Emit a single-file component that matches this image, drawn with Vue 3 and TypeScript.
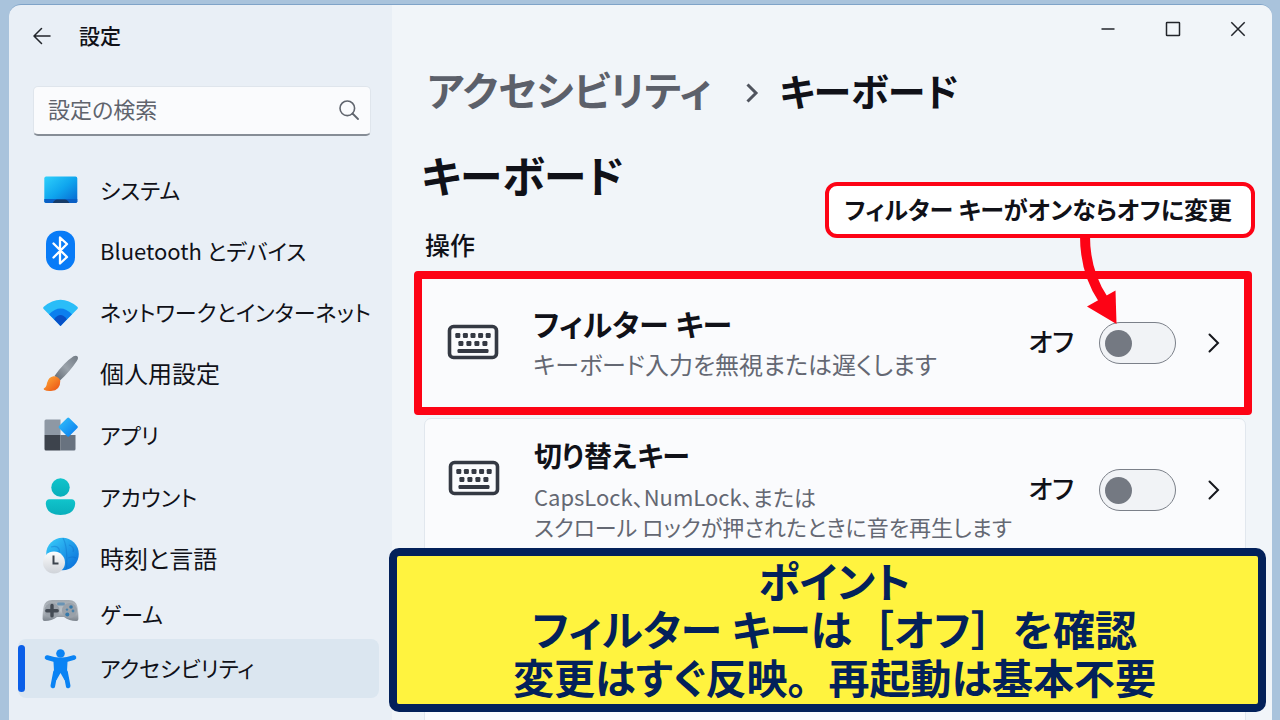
<script setup lang="ts">
import { ref } from 'vue'

interface NavItem {
  id: string
  label: string
  kanji?: boolean
}

interface KeySetting {
  id: string
  title: string
  lines: string[]
  on: boolean
  highlighted: boolean
}

const navItems: NavItem[] = [
  { id: 'system', label: 'システム' },
  { id: 'bluetooth', label: 'Bluetooth とデバイス' },
  { id: 'network', label: 'ネットワークとインターネット' },
  { id: 'personal', label: '個人用設定', kanji: true },
  { id: 'apps', label: 'アプリ' },
  { id: 'account', label: 'アカウント' },
  { id: 'time', label: '時刻と言語', kanji: true },
  { id: 'game', label: 'ゲーム' },
  { id: 'access', label: 'アクセシビリティ' },
]

const activeId = ref('access')
const query = ref('')

const settings = ref<KeySetting[]>([
  {
    id: 'filter',
    title: 'フィルター キー',
    lines: ['キーボード入力を無視または遅くします'],
    on: false,
    highlighted: true,
  },
  {
    id: 'toggle',
    title: '切り替えキー',
    lines: ['CapsLock、NumLock、または', 'スクロール ロックが押されたときに音を再生します'],
    on: false,
    highlighted: false,
  },
])
</script>

<template>
  <div class="window">
    <aside class="sidebar">
      <header class="titlebar">
        <button class="back" type="button" aria-label="戻る">
          <svg width="18" height="18" viewBox="0 0 18 18"><path d="M17 9H1.500M8.500 1.500L1 9l7.500 7.500" fill="none" stroke="#22252b" stroke-width="1.500" stroke-linecap="round" stroke-linejoin="round" /></svg>
        </button>
        <span class="app-name">設定</span>
      </header>

      <label class="search">
        <input v-model="query" type="text" placeholder="設定の検索" aria-label="設定の検索" />
        <svg width="20" height="20" viewBox="0 0 20 20"><circle cx="8.300" cy="8.300" r="7.300" fill="none" stroke="#60656e" stroke-width="1.600" /><path d="M13.500 13.500L19 19" stroke="#60656e" stroke-width="1.800" stroke-linecap="round" /></svg>
      </label>

      <nav class="nav">
        <a
          v-for="item in navItems"
          :key="item.id"
          href="#"
          class="nav-item"
          :class="{ active: item.id === activeId, kanji: item.kanji }"
          @click.prevent="activeId = item.id"
        >
          <svg class="nav-icon" width="40" height="40" viewBox="0 0 40 40" aria-hidden="true">
            <defs>
              <linearGradient id="gScreen" x1="0" y1="0" x2="1" y2="1"><stop offset="0" stop-color="#2fd0fb" /><stop offset=".5" stop-color="#0fa5ee" /><stop offset="1" stop-color="#0764cf" /></linearGradient>
              <linearGradient id="gHandle" x1="1" y1="0" x2="0" y2="1"><stop offset="0" stop-color="#727b85" /><stop offset=".5" stop-color="#9aa2aa" /><stop offset="1" stop-color="#5d6670" /></linearGradient>
              <linearGradient id="gBrush" x1="0" y1="0" x2="1" y2="1"><stop offset="0" stop-color="#ffb03a" /><stop offset="1" stop-color="#ea4d12" /></linearGradient>
              <linearGradient id="gDiamond" x1="0" y1="0" x2="1" y2="1"><stop offset="0" stop-color="#35c3fb" /><stop offset="1" stop-color="#0678ee" /></linearGradient>
              <linearGradient id="gTeal" x1="0" y1="0" x2="0" y2="1"><stop offset="0" stop-color="#10c4cb" /><stop offset="1" stop-color="#08aebb" /></linearGradient>
              <linearGradient id="gGlobe" x1="0" y1="0" x2="1" y2="1"><stop offset="0" stop-color="#3ad0fa" /><stop offset="1" stop-color="#0668d8" /></linearGradient>
              <linearGradient id="gPad" x1="0" y1="0" x2="0" y2="1"><stop offset="0" stop-color="#a2a9b0" /><stop offset=".5" stop-color="#bcc2c8" /><stop offset="1" stop-color="#7b838c" /></linearGradient>
              <linearGradient id="gClock" x1="0" y1="0" x2="0" y2="1"><stop offset="0" stop-color="#fdfdfd" /><stop offset="1" stop-color="#cfd3d9" /></linearGradient>
            </defs>
            <g v-if="item.id === 'system'">
              <rect x="4.300" y="5.600" width="33" height="26.500" rx="1.800" fill="url(#gScreen)" />
              <path d="M4.300 28h33v2.300a1.800 1.800 0 0 1-1.800 1.800H6.100a1.800 1.800 0 0 1-1.800-1.800z" fill="#0a5fc4" />
              <path d="M12.800 32.100q1.500-3.600 4.500-3.600h7.500q3 0 4.500 3.600z" fill="#173c68" />
            </g>
            <g v-else-if="item.id === 'bluetooth'">
              <rect x="6" y="-1.200" width="29" height="39.500" rx="13" fill="#087bf7" />
              <path d="M13.500 11.500L27 25l-7 6.500V5.500l7 6.500-13.500 13.500" fill="none" stroke="#fff" stroke-width="2.300" stroke-linejoin="round" stroke-linecap="round" />
            </g>
            <g v-else-if="item.id === 'network'">
              <path d="M20.500 33L3.400 15.800Q2.600 14.600 3.800 13.700Q20.500-.2 37.300 13.700Q38.400 14.600 37.600 15.800z" fill="#2abdf8" />
              <path d="M20.500 33L9 21.200Q20.500 10 32 21.200z" fill="#0c7fee" />
              <path d="M20.500 33L14.200 26.200Q20.500 18 26.800 26.200z" fill="#0850c6" />
            </g>
            <g v-else-if="item.id === 'personal'">
              <path d="M14.500 22Q24 8.500 33.500 2.300Q36.500 .8 37.900 3.100Q38.400 5 36.800 7Q30 17.500 20 26.500z" fill="url(#gHandle)" />
              <path d="M13.500 22.200Q18.500 22 20.300 26.800Q20.500 36.500 11 37Q6.500 37.300 4 35.700Q3 34.700 4.500 34Q6.500 33 7 29Q8.500 23 13.500 22.200z" fill="url(#gBrush)" />
            </g>
            <g v-else-if="item.id === 'apps'">
              <path d="M6 4.500h14.500v15.500h-16v-14q0-1.500 1.500-1.500z" fill="#8e98a4" />
              <path d="M4.500 20h16v15.500h-14.500q-1.500 0-1.500-1.500z" fill="#3d434c" />
              <path d="M20.500 20h15v14q0 1.500-1.500 1.500h-13.500z" fill="#68727f" />
              <path d="M27.200 2.900q1-1 2 0l8.200 8.200q1 1 0 2l-8.200 8.200q-1 1-2 0l-8.200-8.200q-1-1 0-2z" fill="url(#gDiamond)" />
            </g>
            <g v-else-if="item.id === 'account'">
              <circle cx="20.500" cy="10.500" r="9.200" fill="url(#gTeal)" />
              <path d="M9.500 22.300h22q3.700 0 3.700 4.500Q34.500 37.800 20.500 38.100Q6.500 37.800 5.800 26.800q0-4.500 3.700-4.500z" fill="url(#gTeal)" />
            </g>
            <g v-else-if="item.id === 'time'">
              <circle cx="22.500" cy="15" r="16.300" fill="url(#gGlobe)" />
              <path d="M23-1q5 9 3.500 31M11 8q6-2 8 2t-5 4M29 6q6 2 4 7M28 19q5-2 8 0" fill="none" stroke="#0b63c0" stroke-opacity=".35" stroke-width="1.200" />
              <circle cx="14" cy="23.500" r="11" fill="url(#gClock)" />
              <path d="M13.500 16.500v8h5" fill="none" stroke="#3d444e" stroke-width="2" />
            </g>
            <g v-else-if="item.id === 'game'">
              <path d="M12 6h17Q36 6.300 37.300 12.500Q38.400 17 38.400 25Q38.400 27 36.400 27Q29 27 24 23h-7Q12 27 4.600 27Q2.600 27 2.600 25Q2.600 17 3.700 12.500Q5 6.300 12 6z" fill="url(#gPad)" />
              <circle cx="12" cy="16.500" r="7.600" fill="#9aa1a9" /><circle cx="29.500" cy="16.500" r="7.600" fill="#9aa1a9" />
              <path d="M12 11.500v10.400M6.800 16.700h10.400" stroke="#444b54" stroke-width="3.400" stroke-linecap="round" />
              <circle cx="31" cy="13" r="1.800" fill="#3478a9" /><circle cx="27.300" cy="20.500" r="2" fill="#3478a9" /><circle cx="33" cy="17" r="1.400" fill="#4a82aa" /><circle cx="27" cy="15.600" r="1.200" fill="#4a82aa" />
              <path d="M18.500 10h5" stroke="#6993b4" stroke-width="2.800" stroke-linecap="round" />
            </g>
            <g v-else>
              <circle cx="20.500" cy="4.500" r="4.300" fill="#0a83f4" />
              <path d="M7 8.500Q20.500 13.500 34 8.500M15.500 23L12.800 37M25.500 23L28.200 37" fill="none" stroke="#0a83f4" stroke-width="4.600" stroke-linecap="round" />
              <path d="M13.300 9.500h14.400L27 22l1.500 9h-4L20.500 24l-4 7h-4L14 22z" fill="#0a83f4" />
            </g>
          </svg>
          <span>{{ item.label }}</span>
        </a>
      </nav>
    </aside>

    <main class="content">
      <div class="caption-buttons">
        <button type="button" aria-label="最小化"><svg width="16" height="16" viewBox="0 0 16 16"><path d="M1.500 8h13" stroke="#22252b" stroke-width="1.500" /></svg></button>
        <button type="button" aria-label="最大化"><svg width="16" height="16" viewBox="0 0 16 16"><rect x="1.500" y="1.500" width="13" height="13" rx=".6" fill="none" stroke="#22252b" stroke-width="1.500" /></svg></button>
        <button type="button" aria-label="閉じる"><svg width="16" height="16" viewBox="0 0 16 16"><path d="M1.300 1.300l13.400 13.400M14.700 1.300L1.300 14.700" stroke="#22252b" stroke-width="1.500" /></svg></button>
      </div>

      <div class="breadcrumb">
        <a href="#">アクセシビリティ</a>
        <svg width="14" height="20" viewBox="0 0 14 20" aria-hidden="true"><path d="M2.500 1.500L11 10l-8.500 8.500" fill="none" stroke="#50545e" stroke-width="3" /></svg>
        <span>キーボード</span>
      </div>

      <h1>キーボード</h1>
      <h2>操作</h2>

      <section v-for="s in settings" :key="s.id" class="card" :class="{ highlighted: s.highlighted }">
        <svg class="keyboard" width="52" height="36" viewBox="0 0 52 36" aria-hidden="true">
          <rect x="2.500" y="2.500" width="47" height="31" rx="4" fill="none" stroke="#343943" stroke-width="3.600" />
          <g fill="#343943">
            <rect v-for="n in 5" :key="n" :x="n * 7.6 + .7" y="9" width="5" height="5" rx="1.200" />
            <rect v-for="n in 4" :key="n" :x="n * 8 + 3.400" y="17" width="5" height="5" rx="1.200" />
            <rect x="10.500" y="25" width="31" height="4" rx="1.200" />
          </g>
        </svg>
        <div class="text">
          <h3 :id="s.id">{{ s.title }}</h3>
          <p><span v-for="line in s.lines" :key="line">{{ line }}</span></p>
        </div>
        <div class="control">
          <label :for="s.id + '-switch'">{{ s.on ? 'オン' : 'オフ' }}</label>
          <input :id="s.id + '-switch'" v-model="s.on" type="checkbox" role="switch" :aria-describedby="s.id" />
          <button type="button" aria-label="詳細">
            <svg width="14" height="20" viewBox="0 0 14 20"><path d="M2.500 1.500L11 10l-8.500 8.500" fill="none" stroke="#15171c" stroke-width="2" stroke-linecap="round" /></svg>
          </button>
        </div>
      </section>

      <div class="callout">
        フィルター キーがオンならオフに変更
        <svg width="46" height="90" viewBox="0 0 46 90" aria-hidden="true">
          <path d="M12 0Q12 36 30 63" fill="none" stroke="#fd0315" stroke-width="10" />
          <path d="M42.500 54.500L43.500 88L14 70.500z" fill="#fd0315" />
        </svg>
      </div>
    </main>

    <div class="banner">
      <strong>ポイント</strong>
      <strong>フィルター キーは<span class="full">［</span>オフ<span class="full">］</span>を確認</strong>
      <strong class="note">変更はすぐ反映<span class="full">。</span>再起動は基本不要</strong>
    </div>
  </div>
</template>

<style>
body {
  background: #a9c3dc;
  overflow: hidden;
}
</style>

<style scoped>
.window {
  box-sizing: border-box;
  position: relative;
  display: flex;
  min-height: calc(100vh - 4px);
  margin: 4px 8px 0 9px;
  border-top: 1px solid #7fa3c8;
  border-radius: 12px 12px 0 0;
  overflow: hidden;
  background: #e9eff6;
  color: #101118;
  font-family: 'Noto Sans CJK JP', 'Noto Sans', sans-serif;
  font-feature-settings: 'palt';
}
button {
  display: flex;
  align-items: center;
  justify-content: center;
  padding: 0;
  border: 0;
  background: none;
}
a {
  color: inherit;
  text-decoration: none;
}
h1,
h2,
h3,
p {
  margin: 0;
}
.sidebar {
  flex: 0 0 383px;
  min-width: 0;
  box-sizing: border-box;
  padding: 0 13px 0 9px;
}
.titlebar {
  display: flex;
  align-items: center;
  gap: 28px;
  height: 62px;
  padding-left: 15px;
}
.app-name {
  padding-bottom: 2px;
  font-size: 21px;
  font-weight: 500;
}
.search {
  display: flex;
  align-items: center;
  box-sizing: border-box;
  height: 50px;
  margin: 19px 8px 24px 15px;
  padding: 0 11px 2px 14px;
  border: 1px solid #dfe5ec;
  border-bottom: 2px solid #868d96;
  border-radius: 5px;
  background: #fafbfd;
}
.search input {
  flex: 1;
  min-width: 0;
  padding: 0 0 4px;
  border: 0;
  outline: 0;
  background: none;
  font: inherit;
  font-feature-settings: inherit;
  font-size: 22px;
}
.search input::placeholder {
  color: #60646d;
  opacity: 1;
}
.nav {
  display: grid;
  grid-template-rows: repeat(4, 61px) repeat(2, 62px) 61px 50px 59px;
}
.nav-item {
  position: relative;
  display: flex;
  align-items: center;
  gap: 20px;
  padding-left: 22px;
  border-radius: 8px;
  font-size: 22px;
  white-space: nowrap;
}
.nav-item.kanji {
  font-size: 24px;
}
.nav-item > span {
  padding-bottom: 3px;
}
.nav-item.active {
  background: #dbe6f0;
}
.nav-item.active::before {
  content: '';
  position: absolute;
  left: 0;
  top: 6px;
  bottom: 6px;
  width: 7px;
  border-radius: 4px;
  background: #0b5fe8;
}
.nav-icon {
  flex: none;
  overflow: visible;
}
.content {
  position: relative;
  flex: 1;
  min-width: 0;
  padding: 0 26px 0 32px;
  background: #f1f5f9;
}
.caption-buttons {
  display: flex;
  justify-content: flex-end;
  height: 48px;
  margin-right: -24px;
}
.caption-buttons button {
  width: 65px;
}
.breadcrumb {
  display: flex;
  align-items: center;
  height: 72px;
  padding-left: 3px;
  font-size: 38px;
  font-weight: 700;
}
.breadcrumb a {
  color: #5c606a;
  font-size: 40px;
}
.breadcrumb svg {
  margin: 8px 20px 0 34px;
}
h1 {
  height: 92px;
  margin-left: -3px;
  font-size: 43px;
  line-height: 98px;
}
h2 {
  height: 54px;
  padding-left: 1px;
  font-size: 25px;
  font-weight: 500;
  line-height: 54px;
}
.card {
  display: flex;
  align-items: center;
  box-sizing: border-box;
  height: 316px;
  padding: 0 16px 172px 23px;
  border: 1px solid #e1e7ee;
  border-radius: 7px;
  background: #fafbfd;
}
.card.highlighted {
  height: 144px;
  margin: 0 -6px 3px -10px;
  padding: 0 15px 0 25px;
  border: 8px solid #fd0315;
  border-radius: 4px;
}
.keyboard {
  flex: none;
  margin-bottom: 24px;
}
.highlighted .keyboard {
  margin-bottom: 2px;
}
.text {
  flex: 1;
  min-width: 0;
  padding: 0 0 5px 34px;
}
h3 {
  margin-bottom: 6px;
  font-size: 28px;
  line-height: 40px;
}
.highlighted h3 {
  font-size: 30px;
}
p {
  color: #646873;
  font-size: 22px;
  line-height: 30px;
  white-space: nowrap;
}
.highlighted p {
  font-size: 24px;
}
p span {
  display: block;
}
.control {
  flex: none;
  display: flex;
  align-items: center;
  font-size: 26px;
  font-weight: 500;
}
.control label {
  padding: 0 25px 6px 0;
}
.control input {
  appearance: none;
  box-sizing: border-box;
  display: flex;
  align-items: center;
  width: 77px;
  height: 42px;
  margin: 0 23px 0 0;
  padding: 0 5px;
  border: 1px solid #7b8089;
  border-radius: 21px;
  background: #f1f3f6;
}
.control input::before {
  content: '';
  width: 27px;
  height: 27px;
  border-radius: 50%;
  background: #747982;
}
.control input:checked {
  justify-content: flex-end;
  background: #0b5fe8;
}
.control button {
  width: 30px;
  height: 40px;
}
.callout {
  position: absolute;
  top: 177px;
  right: 17px;
  box-sizing: border-box;
  height: 56px;
  padding: 0 19px 0 16px;
  border: 4px solid #fd0315;
  border-radius: 12px;
  background: #fff;
  font-size: 24px;
  font-weight: 700;
  line-height: 46px;
  white-space: nowrap;
}
.callout svg {
  position: absolute;
  top: 50px;
  right: 132px;
}
.banner {
  position: absolute;
  top: 543px;
  right: 6px;
  left: 380px;
  box-sizing: border-box;
  display: flex;
  flex-direction: column;
  align-items: center;
  height: 164px;
  padding-left: 14px;
  border: 8px solid #03215a;
  border-radius: 10px;
  background: #fff33f;
  color: #03215a;
  font-size: 42px;
  line-height: 48px;
  white-space: nowrap;
}
.banner .note {
  font-size: 41px;
}
.full {
  font-feature-settings: normal;
}
</style>
